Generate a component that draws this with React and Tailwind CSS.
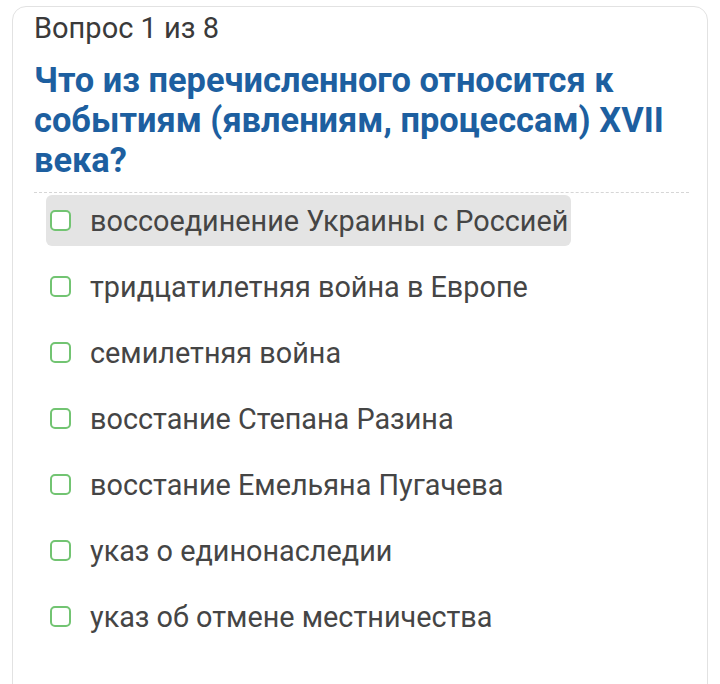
import React from "react";

const options = [
  "воссоединение Украины с Россией",
  "тридцатилетняя война в Европе",
  "семилетняя война",
  "восстание Степана Разина",
  "восстание Емельяна Пугачева",
  "указ о единонаследии",
  "указ об отмене местничества",
];

export default function App() {
  return (
    <div className="h-[684px] overflow-hidden bg-white pt-[6px] px-[12px] font-['Roboto',sans-serif]">
      <div className="rounded-t-[14px] border border-[#e2e2e2] h-[700px] pl-[21px] pr-[18px] pt-[4px]">
        <div className="text-[29px] leading-[34px] text-[#3a3a3a]">Вопрос 1 из 8</div>
        <h1 className="mt-[15px] text-[34.4px] leading-[40px] font-bold text-[#1d5fa0]">
          Что из перечисленного относится к событиям (явлениям, процессам) XVII века?
        </h1>
        <div className="mt-[12px] border-t border-dashed border-[#d6d6d6]" />
        <div className="mt-[2px] ml-[12px] flex flex-col gap-[15px]">
          {options.map((o, i) => (
            <div
              key={o}
              className={`flex h-[51px] w-fit items-center rounded-[6px] pl-[4px] pr-[3px] ${i === 0 ? "bg-[#e4e4e4]" : ""}`}
            >
              <span className="block h-[21px] w-[21px] shrink-0 rounded-[5px] border-2 border-[#72c472] bg-white" />
              <span className="ml-[19px] text-[28.8px] leading-[34px] text-[#454545]">{o}</span>
            </div>
          ))}
        </div>
      </div>
    </div>
  );
}
